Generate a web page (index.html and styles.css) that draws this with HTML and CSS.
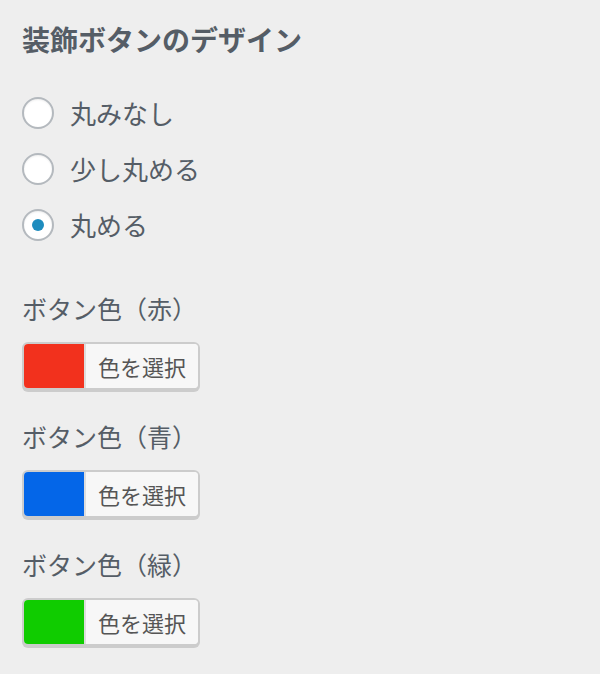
FILE: index.html
```html
<!DOCTYPE html>
<html lang="ja">
<head>
    <meta charset="UTF-8">
    <meta name="viewport" content="width=device-width, initial-scale=1.0">
    <title>装飾ボタンのデザイン</title>
    <link rel="stylesheet" href="styles.css">
</head>
<body>
    <div class="panel">
        <h2 class="title">装飾ボタンのデザイン</h2>

        <div class="radios">
            <label class="radio"><input type="radio" name="corner" value="none"><span>丸みなし</span></label>
            <label class="radio"><input type="radio" name="corner" value="small"><span>少し丸める</span></label>
            <label class="radio"><input type="radio" name="corner" value="round" checked><span>丸める</span></label>
        </div>

        <div class="color-field">
            <div class="field-label">ボタン色（赤）</div>
            <button class="color-result">
                <span class="swatch" style="background: #f2311d;"></span>
                <span class="result-text">色を選択</span>
            </button>
        </div>

        <div class="color-field">
            <div class="field-label">ボタン色（青）</div>
            <button class="color-result">
                <span class="swatch" style="background: #0466e8;"></span>
                <span class="result-text">色を選択</span>
            </button>
        </div>

        <div class="color-field">
            <div class="field-label">ボタン色（緑）</div>
            <button class="color-result">
                <span class="swatch" style="background: #10cc00;"></span>
                <span class="result-text">色を選択</span>
            </button>
        </div>
    </div>
</body>
</html>
```

FILE: styles.css
```css
body { margin: 0; background: #eeeeee; font-family: "Noto Sans CJK JP", "Noto Sans", sans-serif; color: #555d66; }
.panel { padding: 20px 22px; }
.title { font-size: 28px; font-weight: bold; line-height: 38px; margin: 0 0 27px; }
.radios { margin-bottom: 35px; }
.radio { display: flex; align-items: center; gap: 16px; height: 56px; font-size: 26px; cursor: pointer; }
.radio span { margin-top: -2px; }
.radio input { appearance: none; -webkit-appearance: none; margin: 0; width: 32px; height: 32px; box-sizing: border-box; border: 2px solid #b4b9be; border-radius: 50%; background: #fff; box-shadow: inset 0 1px 2px rgba(0,0,0,0.07); display: flex; align-items: center; justify-content: center; }
.radio input:checked::before { content: ""; width: 12px; height: 12px; border-radius: 50%; background: #1e8cbe; }
.color-field { margin-bottom: 26px; }
.field-label { font-size: 25px; line-height: 40px; margin-bottom: 14px; }
.color-result { display: flex; align-items: stretch; padding: 0; height: 48px; box-sizing: border-box; border: 2px solid #cccccc; border-radius: 6px; box-shadow: 0 2px 0 #cccccc; background: #f7f7f7; overflow: hidden; cursor: pointer; font-family: inherit; }
.swatch { width: 60px; }
.result-text { border-left: 2px solid #dddddd; padding: 0 12px; font-size: 22px; line-height: 44px; color: #555555; background: #f7f7f7; }
```
